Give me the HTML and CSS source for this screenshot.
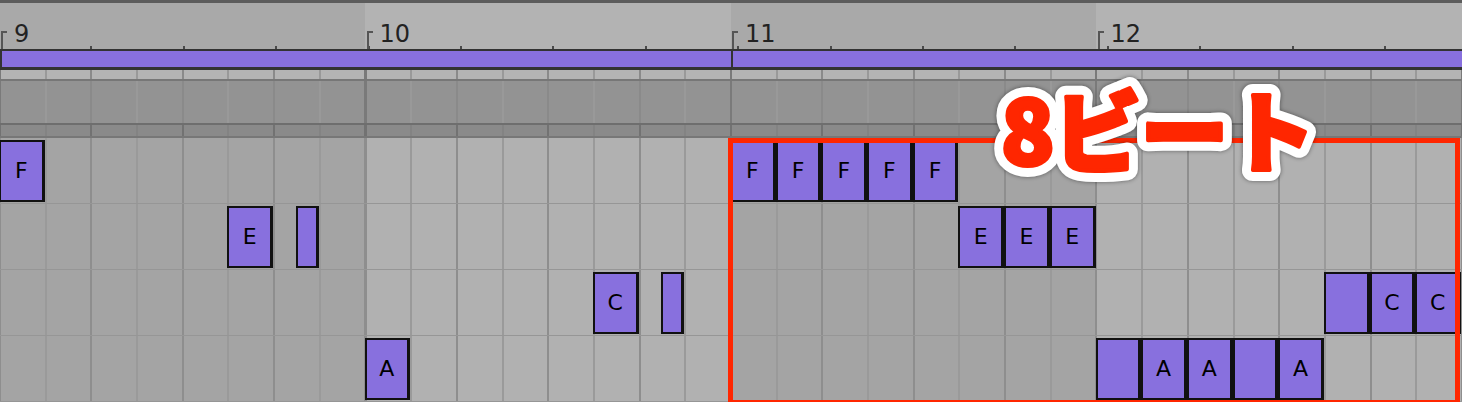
FILE: index.html
```html
<!DOCTYPE html>
<html lang="ja">
<head>
  <meta charset="UTF-8">
  <title>Piano Roll - 8 Beat</title>
  <meta name="viewport" content="width=device-width, initial-scale=1.0">
  <link rel="stylesheet" href="styles.css">
</head>
<body>
  <div class="roll">
    <!-- 小節番号 -->
    <div class="ruler">
      <div class="bar-cell"><span class="bar-num">9</span></div>
      <div class="bar-cell"><span class="bar-num">10</span></div>
      <div class="bar-cell"><span class="bar-num">11</span></div>
      <div class="bar-cell"><span class="bar-num">12</span></div>
    </div>

    <!-- クリップ -->
    <div class="clips">
      <div class="clip"></div>
      <div class="clip"></div>
    </div>

    <div class="lane lane-light"></div>
    <div class="lane lane-grey"></div>
    <div class="lane lane-band"></div>

    <!-- ノート（16分音符単位のグリッド） -->
    <div class="notes">
      <div class="note" style="grid-area: 1 / 1 / 2 / 3">F</div>
      <div class="note" style="grid-area: 1 / 33 / 2 / 35">F</div>
      <div class="note" style="grid-area: 1 / 35 / 2 / 37">F</div>
      <div class="note" style="grid-area: 1 / 37 / 2 / 39">F</div>
      <div class="note" style="grid-area: 1 / 39 / 2 / 41">F</div>
      <div class="note" style="grid-area: 1 / 41 / 2 / 43">F</div>

      <div class="note" style="grid-area: 2 / 11 / 3 / 13">E</div>
      <div class="note" style="grid-area: 2 / 14 / 3 / 15"></div>
      <div class="note" style="grid-area: 2 / 43 / 3 / 45">E</div>
      <div class="note" style="grid-area: 2 / 45 / 3 / 47">E</div>
      <div class="note" style="grid-area: 2 / 47 / 3 / 49">E</div>

      <div class="note" style="grid-area: 3 / 27 / 4 / 29">C</div>
      <div class="note" style="grid-area: 3 / 30 / 4 / 31"></div>
      <div class="note" style="grid-area: 3 / 59 / 4 / 61"></div>
      <div class="note" style="grid-area: 3 / 61 / 4 / 63">C</div>
      <div class="note" style="grid-area: 3 / 63 / 4 / 65">C</div>

      <div class="note" style="grid-area: 4 / 17 / 5 / 19">A</div>
      <div class="note" style="grid-area: 4 / 49 / 5 / 51"></div>
      <div class="note" style="grid-area: 4 / 51 / 5 / 53">A</div>
      <div class="note" style="grid-area: 4 / 53 / 5 / 55">A</div>
      <div class="note" style="grid-area: 4 / 55 / 5 / 57"></div>
      <div class="note" style="grid-area: 4 / 57 / 5 / 59">A</div>
    </div>

    <!-- 注釈 -->
    <div class="highlight"></div>
    <svg class="caption" width="360" height="130" viewBox="0 0 360 130">
      <defs>
        <text id="cap-text" x="21" y="105">8ビート</text>
      </defs>
      <use href="#cap-text" class="cap-back"></use>
      <use href="#cap-text" class="cap-front"></use>
    </svg>
  </div>
</body>
</html>
```

FILE: styles.css
```css
* { margin: 0; padding: 0; box-sizing: border-box; }
html, body {
  width: 100%;
  height: 100%;
}
body {
  background-color: #a4a4a4;
  font-family: 'DejaVu Sans', 'Liberation Sans', sans-serif;
  color: #1a1a1a;
  overflow: hidden;
}

.roll {
  position: relative;
  width: 1462px;
  height: 402px;
  border-top: 3px solid #5c5c5c;
  display: flex;
  flex-direction: column;
}

/* 小節ルーラー */
.ruler {
  height: 46px;
  display: grid;
  grid-template-columns: repeat(4, 1fr);
  background:
    repeating-linear-gradient(90deg, transparent 0 90.4px, #4a4a4a 90.4px 92.4px, transparent 92.4px 91.375px) 0 100% / 100% 3px no-repeat,
    linear-gradient(90deg, #a9a9a9 0 25%, #b3b3b3 25% 50%, #a9a9a9 50% 75%, #b3b3b3 75%);
}
.bar-cell {
  position: relative;
  padding: 19px 0 0 14px;
}
.bar-cell::before {
  content: "";
  position: absolute;
  left: 1px;
  bottom: 0;
  width: 4px;
  height: 16px;
  border-left: 2px solid #555;
  border-top: 2px solid #555;
}
.bar-num {
  font-size: 24px;
  line-height: 24px;
  color: #222;
}

/* クリップ帯 */
.clips {
  height: 22px;
  display: grid;
  grid-template-columns: 1fr 1fr;
  border-top: 2px solid #333;
  border-bottom: 3px solid #333;
}
.clip {
  background-color: #8870de;
  border-left: 2px solid #333;
}

/* グリッド線 */
.lane, .notes {
  background-image:
    repeating-linear-gradient(90deg, #7a7a7a 0 2px, transparent 2px 365.5px),
    repeating-linear-gradient(90deg, #8a8a8a 0 2px, transparent 2px 91.375px),
    repeating-linear-gradient(90deg, #999 0 2px, transparent 2px 45.6875px);
  background-position: -1px 0;
}
.lane-light {
  height: 11px;
  border-bottom: 2px solid #777;
  background-color: #b4b4b4;
}
.lane-grey {
  height: 44px;
  border-bottom: 2px solid #6e6e6e;
  background-color: #939393;
}
.lane-band {
  height: 13px;
  border-bottom: 2px solid #777;
  background-color: #8a8a8a;
  background-image:
    repeating-linear-gradient(90deg, #727272 0 2px, transparent 2px 91.375px),
    repeating-linear-gradient(90deg, #838383 0 2px, transparent 2px 45.6875px);
}

/* ノートエリア */
.notes {
  flex: 1;
  display: grid;
  grid-template-columns: repeat(64, 1fr);
  grid-template-rows: repeat(4, 66px);
  background-image:
    repeating-linear-gradient(180deg, transparent 0 65px, #969696 65px 66px),
    repeating-linear-gradient(90deg, #8e8e8e 0 2px, transparent 2px 365.5px),
    repeating-linear-gradient(90deg, #8e8e8e 0 2px, transparent 2px 91.375px),
    repeating-linear-gradient(90deg, #9a9a9a 0 2px, transparent 2px 45.6875px),
    linear-gradient(90deg, #a4a4a4 0 25%, #b1b1b1 25% 50%, #a4a4a4 50% 75%, #b1b1b1 75%);
  background-position: 0 0, -1px 0, -1px 0, -1px 0, 0 0;
}
.note {
  margin: 2px 2px 2px -1px;
  background-color: #8870de;
  border: 2px solid #111;
  box-shadow: 1px 0 0 #111;
  display: flex;
  align-items: center;
  justify-content: center;
  font-size: 22px;
  color: #000;
}

/* 赤枠と見出し */
.highlight {
  position: absolute;
  left: 728px;
  top: 135px;
  width: 732px;
  height: 267px;
  border: 5px solid #ff2600;
}
.caption {
  position: absolute;
  left: 980px;
  top: 57px;
  overflow: visible;
  filter: drop-shadow(0 0 2px rgba(0, 0, 0, 0.45));
}
#cap-text {
  font-family: 'Noto Sans CJK JP', sans-serif;
  font-weight: 900;
  font-size: 88px;
  letter-spacing: -1px;
}
.cap-back {
  fill: #fff;
  stroke: #fff;
  stroke-width: 22px;
  stroke-linejoin: round;
}
.cap-front {
  fill: #ff2600;
  stroke: #ff2600;
  stroke-width: 4px;
  stroke-linejoin: round;
}
```
